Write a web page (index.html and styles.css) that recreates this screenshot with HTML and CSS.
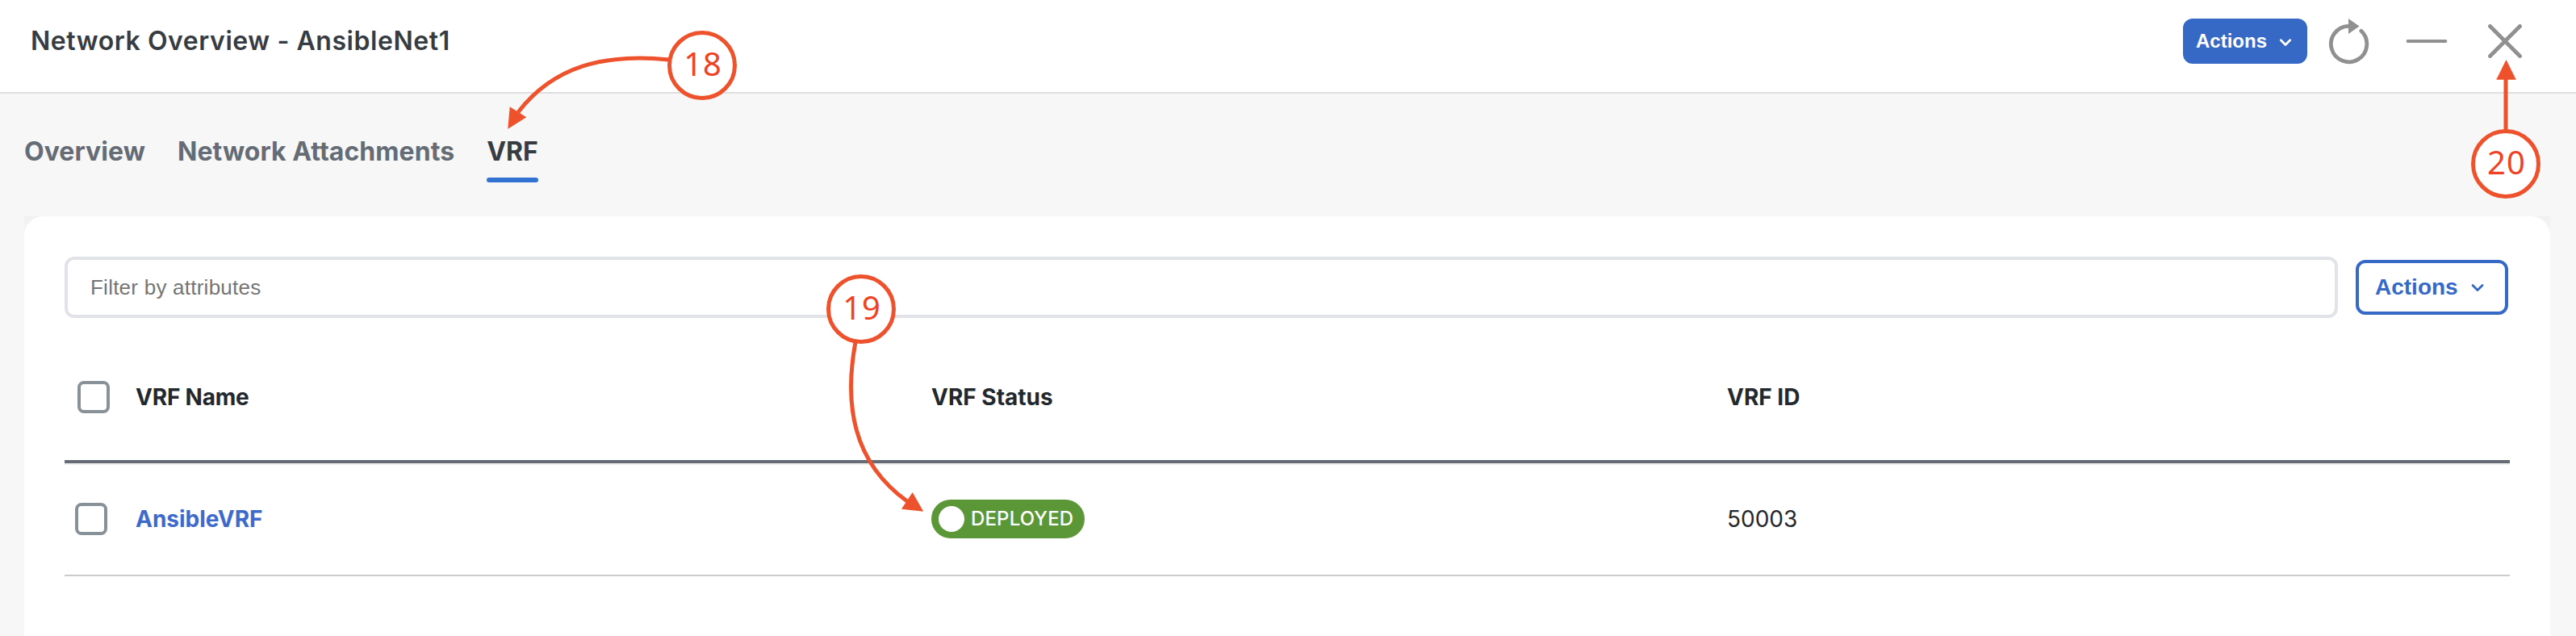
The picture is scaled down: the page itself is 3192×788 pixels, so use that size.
FILE: index.html
```html
<!DOCTYPE html>
<html lang="en">
<head>
<meta charset="utf-8">
<title>Network Overview - AnsibleNet1</title>
<link rel="stylesheet" href="styles.css">
</head>
<body>
<header class="header">
  <h1 class="title">Network Overview - AnsibleNet1</h1>
  <div class="tools">
    <button class="btn btn-primary">Actions
      <svg class="chevron" width="16" height="12" viewBox="0 0 16 12"><path d="M2.3 2.8 8 8.6 13.7 2.8"/></svg>
    </button>
    <svg class="icon refresh" width="52" height="60" viewBox="0 0 52 60">
      <path class="line" d="M41.8 18.3A22.2 22.2 0 1 1 26 12.3"/>
      <path class="solid" d="M26 3v19l13.5-9.5z"/>
    </svg>
    <svg class="icon minimize" width="52" height="6" viewBox="0 0 52 6"><path d="M2.6 3h46.8"/></svg>
    <svg class="icon close" width="42" height="42" viewBox="0 0 42 42"><path d="M2.5 2.5l37 37M39.5 2.5l-37 37"/></svg>
  </div>
</header>

<nav class="tabs">
  <a class="tab">Overview</a>
  <a class="tab">Network Attachments</a>
  <a class="tab active">VRF</a>
</nav>

<div class="card-wrap">
<main class="card">
  <div class="toolbar">
    <input class="filter" type="text" placeholder="Filter by attributes">
    <button class="btn btn-outline">Actions
      <svg class="chevron" width="18" height="12" viewBox="0 0 18 12"><path d="M3 2.5 9 8.6 15 2.5"/></svg>
    </button>
  </div>
  <div class="row head">
    <span class="check"></span>
    <span class="name-head">VRF Name</span>
    <span>VRF Status</span>
    <span>VRF ID</span>
  </div>
  <div class="row item">
    <span class="check"></span>
    <a class="link">AnsibleVRF</a>
    <span class="pill"><i class="dot"></i><span class="pill-text">DEPLOYED</span></span>
    <span>50003</span>
  </div>
</main>
</div>

<svg class="callouts" width="3192" height="788" viewBox="0 0 3192 788">
  <path class="arrow" d="M829 74C748 66 686 82 642 139"/>
  <path class="tip" d="M629.3 159.7 631.7 132.3 652.3 145.3z"/>
  <circle cx="870" cy="81" r="40.5"/>
  <text x="847.2" y="94.3">18</text>

  <path class="arrow" d="M1060 424C1046 500 1056 572 1124 621"/>
  <path class="tip" d="M1144.3 633.7 1130.7 610 1117 630.7z"/>
  <circle cx="1067" cy="383" r="40.5"/>
  <text x="1044.2" y="396">19</text>

  <path class="arrow" d="M3105 162V97"/>
  <path class="tip" d="M3105.5 74 3117.8 98.7 3093.2 98.7z"/>
  <circle cx="3105" cy="203" r="40.5"/>
  <text x="3082" y="215.7">20</text>
</svg>
</body>
</html>
```
FILE: styles.css
```css
* { box-sizing: border-box; }

body {
  margin: 0;
  height: 788px;
  overflow: hidden;
  position: relative;
  display: flex;
  flex-direction: column;
  background: #f7f7f7;
  color: #23282e;
  font-family: Inter, "Noto Sans", sans-serif;
}

.header {
  display: flex;
  align-items: center;
  justify-content: space-between;
  height: 116px;
  padding: 0 67px 12px 38px;
  background: #fff;
  border-bottom: 2px solid #dfdfdf;
}

.title {
  margin: 0;
  font-size: 32px;
  font-weight: 600;
  line-height: 40px;
  letter-spacing: 0.56px;
  color: #373c42;
}

.tools {
  display: flex;
  align-items: center;
}

.btn {
  display: flex;
  align-items: center;
  margin: 0;
  font-family: "Liberation Sans", Arial, sans-serif;
  font-weight: 700;
  border-radius: 12px;
}

.btn-primary {
  width: 154px;
  height: 56px;
  padding: 0 0 0 16px;
  gap: 15px;
  border: 0;
  background: #3669c6;
  color: #fff;
  font-size: 24px;
}

.btn-outline {
  width: 189px;
  height: 68px;
  padding: 0 0 0 20px;
  gap: 15px;
  border: 4px solid #3669c6;
  background: #fff;
  color: #3669c6;
  font-size: 28px;
}

.chevron {
  fill: none;
  stroke: currentColor;
  stroke-width: 2.8;
  stroke-linecap: round;
  stroke-linejoin: round;
}

.btn-primary .chevron { margin-top: 3px; }
.btn-outline .chevron { margin-top: 2px; }

.icon {
  fill: none;
  stroke: #909090;
  stroke-linecap: round;
}

.refresh { margin: 0 0 2px 25px; }
.refresh .line { stroke-width: 4.8; }
.refresh .solid { fill: #909090; stroke: none; }
.minimize { margin-left: 45px; stroke-width: 4; }
.close { margin-left: 50px; stroke-width: 4.8; }

.tabs {
  display: flex;
  gap: 40px;
  height: 152px;
  padding: 56px 30px 0;
}

.tab {
  height: 54px;
  font-size: 32px;
  font-weight: 700;
  line-height: 32px;
  letter-spacing: 0.05px;
  color: #656c75;
}

.tab.active {
  display: flex;
  flex-direction: column;
  justify-content: space-between;
  color: #373c42;
  letter-spacing: 0;
}

.tab.active::after {
  content: "";
  height: 6px;
  border-radius: 3px;
  background: #3272d2;
}

.card-wrap {
  flex: 1;
  margin: 0 32px 0 30px;
  background: linear-gradient(#f1f1f1, #f7f7f7 30px);
}

.card {
  height: 100%;
  padding: 50px 50px 0;
  border-radius: 24px 24px 0 0;
  background: #fff;
}

.toolbar {
  display: flex;
  align-items: center;
  justify-content: space-between;
  margin-right: 2px;
}

.filter {
  width: 2817px;
  height: 76px;
  padding: 0 28px;
  border: 4px solid #e2e3e8;
  border-radius: 12px;
  background: #fff;
  font: 26px "Liberation Sans", Arial, sans-serif;
  letter-spacing: 0.24px;
}

.filter::placeholder { color: #757575; opacity: 1; }

.row {
  display: grid;
  grid-template-columns: 88px 986px 986px 1fr;
  align-items: center;
  font-size: 28px;
  line-height: 36px;
}

.head {
  height: 180px;
  padding-top: 20px;
  border-bottom: 4px solid #656c75;
  font-weight: 700;
}

.name-head { letter-spacing: -0.2px; }

.item {
  height: 140px;
  padding-bottom: 2px;
  border-top: 2px solid #f0f0f0;
  border-bottom: 2px solid #cbcbcd;
}

.check {
  width: 40px;
  height: 40px;
  margin-left: 13px;
  border: 4px solid #889098;
  border-radius: 8px;
}

.head .check { margin-left: 16px; }

.link {
  color: #3e6acb;
  font-weight: 700;
}

.pill {
  display: flex;
  align-items: center;
  width: 190px;
  height: 48px;
  padding-left: 9px;
  gap: 8px;
  border-radius: 24px;
  background: #5c9737;
  color: #fff;
  font-size: 24px;
  font-weight: 500;
  letter-spacing: 0.15px;
}

.dot {
  width: 32px;
  height: 32px;
  border-radius: 50%;
  background: #fff;
}

.pill-text { padding-bottom: 1px; }

/* Numbered markers float above the interface */
.callouts {
  position: absolute;
  inset: 0;
  pointer-events: none;
}

.callouts circle {
  fill: #fff;
  stroke: #ee522d;
  stroke-width: 5;
}

.callouts .arrow {
  fill: none;
  stroke: #ee522d;
  stroke-width: 5;
}

.callouts .tip { fill: #ee522d; }

.callouts text {
  fill: #ef4123;
  font: 400 40px "Noto Sans", sans-serif;
  letter-spacing: 1px;
}
```
